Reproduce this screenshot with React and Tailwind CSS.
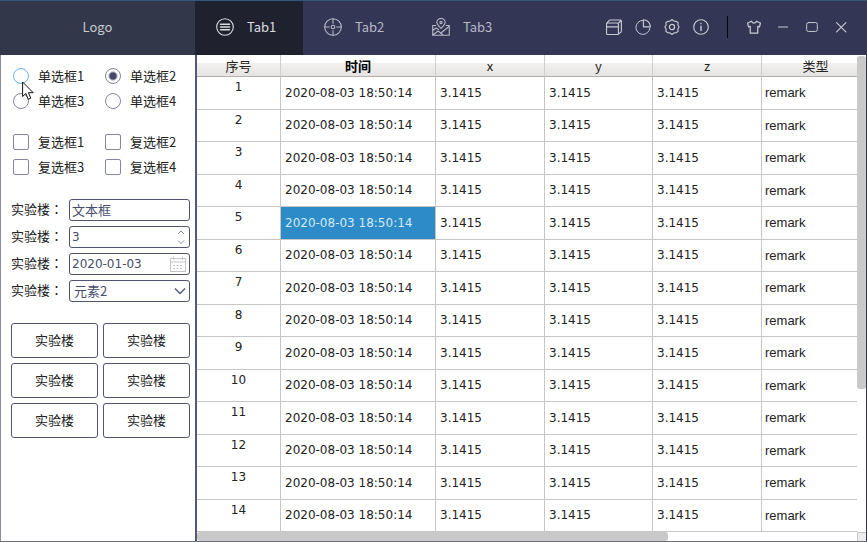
import React, { useState } from "react";

function Icon({ size = "size-4", children }) {
  return (
    <svg
      viewBox="0 0 18 18"
      className={`${size} shrink-0`}
      fill="none"
      stroke="currentColor"
      strokeWidth="1.1"
      strokeLinecap="round"
      strokeLinejoin="round"
      aria-hidden="true"
    >
      {children}
    </svg>
  );
}

const tabs = [
  {
    name: "Tab1",
    icon: (
      <>
        <circle cx="9" cy="9" r="8.3" />
        <path d="M4.500 6.200h9M4.500 9h9M4.500 11.800h9" strokeWidth="1.500" />
      </>
    ),
  },
  {
    name: "Tab2",
    icon: (
      <>
        <circle cx="9" cy="9" r="8.3" />
        <circle cx="9" cy="9" r="1.8" />
        <path d="M9 .8v4.400M9 12.800v4.400M.8 9h4.400M12.800 9h4.400" />
      </>
    ),
  },
  {
    name: "Tab3",
    icon: (
      <>
        <path d="M9 10.500C6.500 7.500 4.800 6.300 4.800 4.600a4.200 4.200 0 0 1 8.400 0c0 1.700-1.700 2.900-4.200 5.900z" />
        <circle cx="9" cy="4.500" r="1.100" />
        <path d="M3.800 7.500H.7v9.800h16.600V7.500h-3.100M.8 12.500l3.200-2.500 2.500 1.500M1 17l5-4 2 1.500 3 2.500M9.500 14.500l7.500-6" />
      </>
    ),
  },
];

const tools = [
  {
    name: "窗口",
    icon: (
      <>
        <rect x=".6" y="4.500" width="13.400" height="12.900" rx="1.200" strokeWidth="1.300" />
        <path d="M1 8.800h13" strokeWidth="1.500" />
        <path d="M1.400 4.200l2-2.400q.5-.7 1.300-.7h11.400q1.200 0 1.200 1.200v11q0 .8-.6 1.400l-2.200 2M14 4.700l2.800-3" strokeWidth="1.300" />
      </>
    ),
  },
  {
    name: "统计",
    icon: (
      <>
        <path d="M8.500 1.500a7.900 7.900 0 1 0 8.300 8.800" />
        <path d="M9.500.8a8 8 0 0 1 7.800 8H9.500z" strokeWidth="1.300" />
      </>
    ),
  },
  {
    name: "设置",
    icon: (
      <>
        <path
          d="M9 .5l2.300 1.900 2.700.3 1.900 1.500-.3 2.500 1.400 2.300-1.400 2.300.3 2.500-1.900 1.500-2.700.3L9 17.500l-2.300-1.900-2.700-.3-1.900-1.500.3-2.500L1 9l1.400-2.300-.3-2.500L4 2.700l2.700-.3z"
          strokeWidth="1.300"
        />
        <circle cx="9" cy="9" r="2.900" strokeWidth="1.400" />
      </>
    ),
  },
  {
    name: "关于",
    icon: (
      <>
        <circle cx="9" cy="9" r="8.200" strokeWidth="1.300" />
        <path d="M9 8v5M9 5v.4" strokeWidth="1.600" />
      </>
    ),
  },
];

const windowButtons = [
  {
    name: "换肤",
    icon: (
      <path
        d="M6.200 2.500L1.800 4.500 2.800 8.800l2-.5v7.700h8.400V8.300l2 .5 1-4.300-4.400-2C11.300 5.300 6.700 5.300 6.200 2.500z"
        strokeWidth="1.400"
      />
    ),
  },
  { name: "最小化", icon: <path d="M4 9h10" strokeWidth="1.400" /> },
  {
    name: "最大化",
    icon: <rect x="3" y="4" width="12" height="10" rx="2" />,
  },
  {
    name: "关闭",
    icon: <path d="M4 4l10.500 10.500M14.500 4L4 14.500" strokeWidth="1.300" />,
  },
];

const columns = ["序号", "时间", "x", "y", "z", "类型"];
const rows = Array.from({ length: 14 }, (_, i) => ({
  id: i + 1,
  time: "2020-08-03 18:50:14",
  values: ["3.1415", "3.1415", "3.1415"],
  remark: "remark",
}));

function ToolButton({ name, icon }) {
  return (
    <button
      type="button"
      aria-label={name}
      className="flex h-8 w-[29px] items-center justify-center"
    >
      <Icon>{icon}</Icon>
    </button>
  );
}

function Header({ active, onSelect }) {
  return (
    <header className="flex h-[55px] shrink-0 border-t border-[#31587a] bg-[#333655] text-[#c9cad2]">
      <div className="flex w-[195px] items-center justify-center bg-[#323849] pb-0.5">
        Logo
      </div>
      <nav className="flex">
        {tabs.map((tab) => (
          <button
            key={tab.name}
            type="button"
            onClick={() => onSelect(tab.name)}
            className={`flex w-[108px] items-center gap-[13px] pb-0.5 pl-[21px] ${
              active === tab.name ? "bg-[#1f222e] text-[#dcdde2]" : "text-[#b9bac8]"
            }`}
          >
            <Icon size="size-[18px]">{tab.icon}</Icon>
            {tab.name}
          </button>
        ))}
      </nav>
      <div className="ml-auto flex items-center pr-3 pb-0.5">
        {tools.map((t) => (
          <ToolButton key={t.name} {...t} />
        ))}
        <span className="mr-[11px] ml-3 h-[22px] w-px bg-[#07070c]" />
        {windowButtons.map((t) => (
          <ToolButton key={t.name} {...t} />
        ))}
      </div>
    </header>
  );
}

function Radio({ label, checked, hovered, onChange }) {
  return (
    <label className="flex h-[25px] items-center gap-[9px]">
      <input
        type="radio"
        name="choice"
        checked={checked}
        onChange={onChange}
        className={`size-4 appearance-none rounded-full border bg-white checked:bg-[radial-gradient(circle,#464a68_0_3px,transparent_5px)] ${
          hovered ? "border-[#64b5e3]" : "border-[#8587a0]"
        }`}
      />
      {label}
    </label>
  );
}

function Field({ id, label, children }) {
  return (
    <div className="flex items-center">
      <label htmlFor={id} className="w-[58px] shrink-0 pb-0.5 whitespace-nowrap">
        {label}
        <span className="font-['Noto_Sans_CJK_TC',sans-serif]">：</span>
      </label>
      <div className="relative flex h-[22px] min-w-0 flex-1 items-center rounded-[3px] border border-[#505470] bg-white text-[#484c6c]">
        {children}
      </div>
    </div>
  );
}

const inputClass = "h-full w-full min-w-0 bg-transparent pl-[2px] outline-none";
const numberClass = "font-['DejaVu_Sans',sans-serif] text-xs";

function Sidebar() {
  const [choice, setChoice] = useState("单选框2");
  return (
    <aside className="flex w-[197px] shrink-0 flex-col border-r-2 border-l border-r-[#555976] border-l-[#8b8da6] bg-white pt-2 pr-[5px] pl-[10px]">
      <fieldset className="relative grid grid-cols-[92px_1fr] pl-[2px]">
        {["单选框1", "单选框2", "单选框3", "单选框4"].map((name) => (
          <Radio
            key={name}
            label={name}
            checked={choice === name}
            hovered={name === "单选框1"}
            onChange={() => setChoice(name)}
          />
        ))}
        <svg
          viewBox="0 0 12 20"
          className="pointer-events-none absolute top-[18px] left-[11px] h-5 w-3"
          aria-hidden="true"
        >
          <path
            d="M.6 1v14.500l3.300-3 2.300 5.800 2.600-1.100-2.400-5.500h4.800z"
            fill="#fff"
            stroke="#111"
            strokeWidth="1"
          />
        </svg>
      </fieldset>
      <fieldset className="mt-4 grid grid-cols-[92px_1fr] pl-[2px]">
        {["复选框1", "复选框2", "复选框3", "复选框4"].map((name) => (
          <label key={name} className="flex h-[25px] items-center gap-[9px]">
            <input
              type="checkbox"
              className="size-4 appearance-none rounded-[2px] border border-[#8587a0] bg-white checked:bg-[#464a68]"
            />
            {name}
          </label>
        ))}
      </fieldset>

      <div className="mt-5 flex flex-col gap-[5px]">
        <Field id="text" label="实验楼">
          <input
            id="text"
            type="text"
            defaultValue="文本框"
            className={`${inputClass} pb-0.5`}
          />
        </Field>
        <Field id="count" label="实验楼">
          <input
            id="count"
            type="text"
            inputMode="numeric"
            defaultValue="3"
            className={`${inputClass} ${numberClass}`}
          />
          <svg viewBox="0 0 8 16" className="mr-1 h-4 w-2 shrink-0" fill="none" stroke="#8587a0" aria-hidden="true">
            <path d="M1 5l3-3 3 3M1 11.500l3 3 3-3" />
          </svg>
        </Field>
        <Field id="date" label="实验楼">
          <input
            id="date"
            type="text"
            defaultValue="2020-01-03"
            className={`${inputClass} ${numberClass}`}
          />
          <svg viewBox="0 0 16 16" className="mr-[3px] size-4 shrink-0" fill="none" stroke="#c4c4c8" aria-hidden="true">
            <path d="M.5 2.500h15v13H.5zM.5 6h15M3.500.5v3.500M12.500.5v3.500" />
            <path d="M3 9.500h10.500M3 12.500h10.500" strokeDasharray="2 1.500" />
          </svg>
        </Field>
        <Field id="element" label="实验楼">
          <select id="element" className="h-full w-full appearance-none bg-transparent pb-0.5 pl-1 outline-none">
            <option>元素2</option>
            <option>元素1</option>
          </select>
          <svg
            viewBox="0 0 12 8"
            className="pointer-events-none absolute right-[3px] h-2 w-3"
            fill="none"
            stroke="#505470"
            strokeWidth="1.300"
            aria-hidden="true"
          >
            <path d="M1 1.500l5 5 5-5" />
          </svg>
        </Field>
      </div>

      <div className="mt-[21px] grid grid-cols-2 gap-[5px]">
        {[1, 2, 3, 4, 5, 6].map((n) => (
          <button
            key={n}
            type="button"
            className="h-[35px] rounded-[3px] border border-[#505470] bg-white pb-0.5"
          >
            实验楼
          </button>
        ))}
      </div>
    </aside>
  );
}

const cell = "border-r border-b border-[#c6c6c6] p-0";

function DataTable() {
  return (
    <main className="grid min-w-0 flex-1 grid-cols-[1fr_9px] grid-rows-[1fr_9px] border-r border-[#333655] bg-white">
      <div className="min-h-0 min-w-0 overflow-hidden">
        <table className="h-full w-[673px] table-fixed border-separate border-spacing-0 font-['DejaVu_Sans',sans-serif] text-xs text-[#222]">
          <colgroup>
            <col className="w-[84px]" />
            <col className="w-[155px]" />
            <col className="w-[109px]" />
            <col className="w-[108px]" />
            <col className="w-[109px]" />
            <col className="w-[108px]" />
          </colgroup>
          <thead>
            <tr className="h-[22px]">
              {columns.map((name) => (
                <th
                  key={name}
                  className={`border-r border-b border-r-[#cfcdcb] border-b-[#b3b2ae] bg-linear-to-b from-white from-40% via-[#f3f1ef] via-40% to-[#e6e4e2] p-0 font-['Noto_Sans_CJK_SC',sans-serif] text-[13px] leading-5 ${
                    name === "时间" ? "font-bold text-black" : "font-normal"
                  }`}
                >
                  {name}
                </th>
              ))}
            </tr>
          </thead>
          <tbody>
            {rows.map((row) => (
              <tr key={row.id}>
                <td className={`${cell} text-center align-top leading-5`}>{row.id}</td>
                <td
                  className={`${cell} pl-1 ${
                    row.id === 5 ? "bg-[#2d8bc7] text-[#d3e9f7]" : ""
                  }`}
                >
                  {row.time}
                </td>
                {row.values.map((v, i) => (
                  <td key={i} className={`${cell} pl-1`}>
                    {v}
                  </td>
                ))}
                <td className={`${cell} pl-[3px] font-['Liberation_Sans',sans-serif] text-[13px]`}>
                  {row.remark}
                </td>
              </tr>
            ))}
          </tbody>
        </table>
      </div>
      <div className="pt-px">
        <div className="h-[70%] rounded-[3px] bg-[#c9c9c9]" />
      </div>
      <div>
        <div className="h-full w-[71.4%] rounded-[3px] bg-[#c9c9c9]" />
      </div>
      <div className="border-t border-l border-[#c6c6c6] bg-[#ececec]" />
    </main>
  );
}

export default function App() {
  const [active, setActive] = useState("Tab1");
  return (
    <div className="flex h-screen flex-col border-b border-[#6a6c86] bg-white font-['Noto_Sans_CJK_SC',sans-serif] text-[13px] leading-5 text-[#222]">
      <Header active={active} onSelect={setActive} />
      <div className="flex min-h-0 flex-1">
        <Sidebar />
        <DataTable />
      </div>
    </div>
  );
}
